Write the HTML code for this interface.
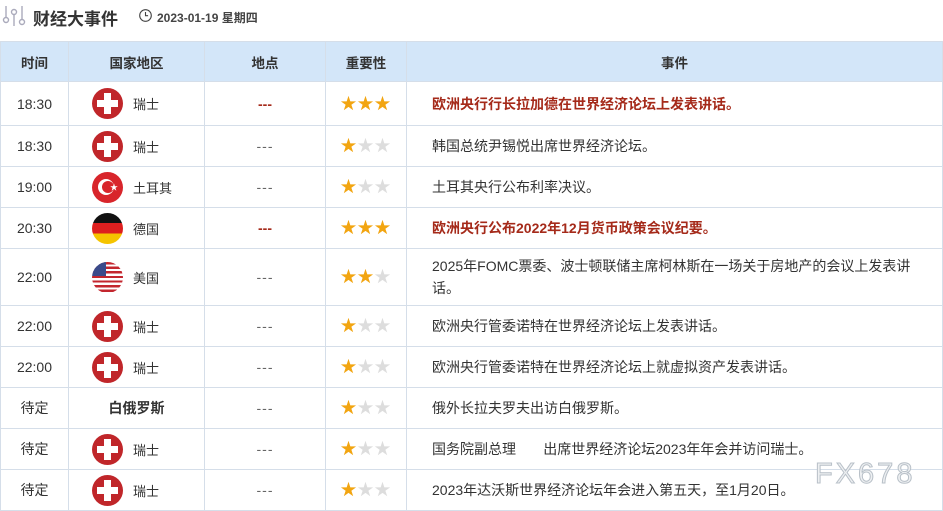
<!DOCTYPE html>
<html><head><meta charset="utf-8"><style>
*{margin:0;padding:0;box-sizing:border-box}
body{width:943px;height:509px;overflow:hidden;background:#fff;font-family:"Liberation Sans","Noto Sans CJK SC",sans-serif;color:#333;position:relative}
.top{position:absolute;left:0;top:0;height:33px;width:943px}
.title{position:absolute;left:33px;top:5px;font-size:17px;font-weight:bold;color:#333}
.date{position:absolute;left:138px;top:9px;font-size:12px;font-weight:bold;color:#444}
table{position:absolute;left:0;top:41px;width:943px;border-collapse:collapse;table-layout:fixed}
td,th{border:1px solid #d5dee9;font-size:14px;text-align:center;vertical-align:middle;font-weight:normal}
th{background:#d3e6f9;height:40px;font-weight:bold;color:#333;font-size:13.5px}
td.e{text-align:left;padding-left:25px;padding-right:20px;line-height:22px;font-size:14px}
.r{color:#a52a1a;font-weight:bold}
.dash{color:#666;letter-spacing:1px}
.rd{color:#a52a1a;font-weight:bold}
.c{display:flex;align-items:center;padding-left:23px;font-size:13px}
.c span{margin-left:10px}
.f{width:31px;height:31px;border-radius:50%;overflow:hidden;flex:none;position:relative}
.st{font-size:16px;letter-spacing:1px;padding-bottom:4px}
.y{color:#f2a511}.g{color:#ddd}
.wm{position:absolute;left:815px;top:458px;font-size:29px;color:#eef0f2;letter-spacing:3px;-webkit-text-stroke:1px #b8c0c8}
.cx1{position:absolute;left:12px;top:5px;width:7px;height:21px;background:#fff}
.cx2{position:absolute;left:5px;top:12px;width:21px;height:7px;background:#fff}
</style></head><body>
<div class="top">
<svg style="position:absolute;left:2px;top:5px" width="24" height="22" viewBox="0 0 24 22" fill="none" stroke="#aab" stroke-width="1.4"><line x1="4" y1="1" x2="4" y2="12"/><circle cx="4" cy="15" r="2.5"/><line x1="12" y1="10" x2="12" y2="21"/><circle cx="12" cy="7" r="2.5"/><line x1="20" y1="1" x2="20" y2="14"/><circle cx="20" cy="17" r="2.5"/></svg>
<div class="title">财经大事件</div>
<svg style="position:absolute;left:139px;top:9px" width="13" height="13" viewBox="0 0 13 13" fill="none" stroke="#444" stroke-width="1.1"><circle cx="6.5" cy="6.5" r="5.8"/><path d="M6.5 3v3.7h2.6"/></svg>
<div class="date" style="left:157px">2023-01-19 星期四</div>
</div>
<table>
<colgroup><col style="width:68px"><col style="width:136px"><col style="width:121px"><col style="width:81px"><col></colgroup>
<tr><th>时间</th><th>国家地区</th><th>地点</th><th>重要性</th><th>事件</th></tr>
<tr style="height:44px"><td>18:30</td><td><div class="c"><div class="f" style="background:#c0262a"><i class="cx1"></i><i class="cx2"></i></div><span>瑞士</span></div></td><td class="rd">---</td><td class="st"><b class="y">★★★</b></td><td class="e r">欧洲央行行长拉加德在世界经济论坛上发表讲话。</td></tr>
<tr style="height:41px"><td>18:30</td><td><div class="c"><div class="f" style="background:#c0262a"><i class="cx1"></i><i class="cx2"></i></div><span>瑞士</span></div></td><td class="dash">---</td><td class="st"><b class="y">★</b><b class="g">★★</b></td><td class="e">韩国总统尹锡悦出席世界经济论坛。</td></tr>
<tr style="height:41px"><td>19:00</td><td><div class="c"><div class="f" style="background:#d8252b"><i style="position:absolute;left:6px;top:7px;width:16px;height:16px;border-radius:50%;background:#fff"></i><i style="position:absolute;left:10px;top:9px;width:12px;height:12px;border-radius:50%;background:#d8252b"></i><i style="position:absolute;left:18px;top:10px;color:#fff;font-size:8px;font-style:normal">★</i></div><span>土耳其</span></div></td><td class="dash">---</td><td class="st"><b class="y">★</b><b class="g">★★</b></td><td class="e">土耳其央行公布利率决议。</td></tr>
<tr style="height:41px"><td>20:30</td><td><div class="c"><div class="f" style="background:linear-gradient(#111 0 33%,#dd1f1f 33% 66%,#f5c400 66%)"></div><span>德国</span></div></td><td class="rd">---</td><td class="st"><b class="y">★★★</b></td><td class="e r">欧洲央行公布2022年12月货币政策会议纪要。</td></tr>
<tr style="height:57px"><td>22:00</td><td><div class="c"><div class="f" style="background:repeating-linear-gradient(#c3262e 0 2.3px,#fff 2.3px 4.6px)"><i style="position:absolute;left:0;top:0;width:14px;height:14px;background:#3a4a8a"></i></div><span>美国</span></div></td><td class="dash">---</td><td class="st"><b class="y">★★</b><b class="g">★</b></td><td class="e">2025年FOMC票委、波士顿联储主席柯林斯在一场关于房地产的会议上发表讲话。</td></tr>
<tr style="height:41px"><td>22:00</td><td><div class="c"><div class="f" style="background:#c0262a"><i class="cx1"></i><i class="cx2"></i></div><span>瑞士</span></div></td><td class="dash">---</td><td class="st"><b class="y">★</b><b class="g">★★</b></td><td class="e">欧洲央行管委诺特在世界经济论坛上发表讲话。</td></tr>
<tr style="height:41px"><td>22:00</td><td><div class="c"><div class="f" style="background:#c0262a"><i class="cx1"></i><i class="cx2"></i></div><span>瑞士</span></div></td><td class="dash">---</td><td class="st"><b class="y">★</b><b class="g">★★</b></td><td class="e">欧洲央行管委诺特在世界经济论坛上就虚拟资产发表讲话。</td></tr>
<tr style="height:41px"><td>待定</td><td style="font-weight:bold">白俄罗斯</td><td class="dash">---</td><td class="st"><b class="y">★</b><b class="g">★★</b></td><td class="e">俄外长拉夫罗夫出访白俄罗斯。</td></tr>
<tr style="height:41px"><td>待定</td><td><div class="c"><div class="f" style="background:#c0262a"><i class="cx1"></i><i class="cx2"></i></div><span>瑞士</span></div></td><td class="dash">---</td><td class="st"><b class="y">★</b><b class="g">★★</b></td><td class="e">国务院副总理&nbsp;&nbsp;&nbsp;&nbsp;&nbsp;&nbsp;&nbsp;出席世界经济论坛2023年年会并访问瑞士。</td></tr>
<tr style="height:41px"><td>待定</td><td><div class="c"><div class="f" style="background:#c0262a"><i class="cx1"></i><i class="cx2"></i></div><span>瑞士</span></div></td><td class="dash">---</td><td class="st"><b class="y">★</b><b class="g">★★</b></td><td class="e">2023年达沃斯世界经济论坛年会进入第五天，至1月20日。</td></tr>
</table>
<div class="wm">FX678</div>
</body></html>
